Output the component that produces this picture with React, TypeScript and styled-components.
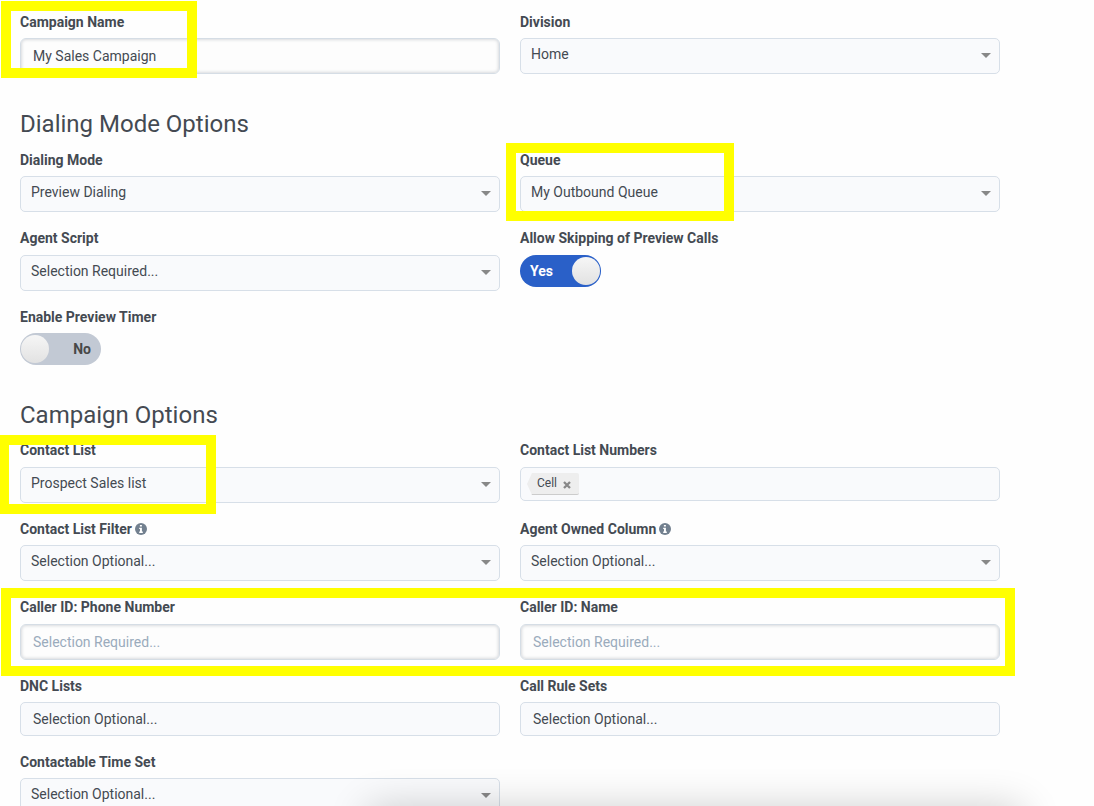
import React from "react";
import styled, { createGlobalStyle } from "styled-components";

const Global = createGlobalStyle`
  * { box-sizing: border-box; }
  html, body { margin: 0; height: 100%; overflow: hidden; background: #fefefe; }
  body { font-family: Roboto, "Liberation Sans", sans-serif; font-size: 14px; color: #444a52; }
`;

const Page = styled.main`
  position: relative;
  width: 1094px;
  height: 806px;
  overflow: hidden;
  padding: 12px 0 0 20px;
`;

const Section = styled.section<{ $rows: string; $top?: number }>`
  display: grid;
  width: 980px;
  grid-template-columns: 480px 480px;
  column-gap: 20px;
  grid-template-rows: ${(p) => p.$rows};
  padding-top: ${(p) => p.$top ?? 0}px;
`;

const Heading = styled.h2`
  grid-column: 1 / -1;
  margin: 0;
  font-size: 24px;
  line-height: 30px;
  font-weight: 400;
`;

const Field = styled.div`
  display: flex;
  flex-direction: column;
  align-items: flex-start;
`;

const Label = styled.label`
  display: flex;
  align-items: center;
  gap: 3px;
  height: 20px;
  margin-bottom: 6.25px;
  font-weight: 700;
  line-height: 20px;
  white-space: nowrap;
`;

const SelectBox = styled.div`
  display: flex;
  align-items: center;
  justify-content: space-between;
  width: 100%;
  height: 36px;
  padding: 0 8px 4px 10px;
  border: 1px solid #d7dfe8;
  border-radius: 5px;
  background: #f9fafc;
`;

const Caret = styled.span`
  width: 0;
  height: 0;
  margin-top: 3px;
  border: 5px solid transparent;
  border-top: 5px solid #888;
  border-bottom: 0;
`;

const TextBox = styled.div<{ $placeholder?: boolean }>`
  width: 100%;
  height: 36px;
  padding: 0 12px;
  border: 1px solid #d5dde5;
  border-radius: 6px;
  background: #fdfdfd;
  box-shadow: inset 0 0 3px 1px rgba(40, 55, 70, 0.17);
  line-height: 35px;
  color: ${(p) => (p.$placeholder ? "#9aabbc" : "#444a52")};
`;

const MultiBox = styled.div`
  display: flex;
  align-items: center;
  width: 100%;
  height: 34px;
  padding: 0 12px;
  border: 1px solid #d7dfe8;
  border-radius: 5px;
  background: #f9fafc;
`;

const Tag = styled.span`
  display: flex;
  align-items: center;
  gap: 6px;
  height: 22px;
  width: 52px;
  margin: 1px 0 0 -6px;
  padding: 0 0 2px 10px;
  font-size: 12px;
  background: #eee;
  clip-path: polygon(5px 0, 100% 0, 100% 100%, 5px 100%, 0 50%);
  border-bottom: 1px solid #ccc;
  border-radius: 0 2px 2px 0;
`;

const CrossIcon = styled.svg`
  margin-top: 4px;
  flex: none;
`;

const Track = styled.div<{ $on?: boolean }>`
  display: flex;
  flex-direction: ${(p) => (p.$on ? "row" : "row-reverse")};
  align-items: center;
  justify-content: space-between;
  width: 81px;
  height: 32px;
  padding: ${(p) => (p.$on ? "0 1px 0 10px" : "0 10px 0 1px")};
  border-radius: 16px;
  background: ${(p) => (p.$on ? "#2a60c8" : "#c2c9d4")};
  color: ${(p) => (p.$on ? "#fff" : "#484848")};
  font-weight: 700;
`;

const Knob = styled.span`
  width: 28px;
  height: 28px;
  border-radius: 50%;
  background: linear-gradient(#f6f6f6, #e2e2e2);
`;

const Highlight = styled.div<{ $x: number; $y: number; $w: number; $h: number; $left?: number }>`
  position: absolute;
  left: ${(p) => p.$x}px;
  top: ${(p) => p.$y}px;
  width: ${(p) => p.$w}px;
  height: ${(p) => p.$h}px;
  border: 10px solid #ffff00;
  border-left-width: ${(p) => p.$left ?? 10}px;
  pointer-events: none;
`;

const FooterShadow = styled.div`
  position: absolute;
  left: 372px;
  width: 646px;
  top: 812px;
  height: 60px;
  box-shadow: 0 0 40px 4px rgba(0, 0, 0, 0.2);
`;

const InfoIcon = () => (
  <svg width="12" height="12" viewBox="0 0 12 12">
    <circle cx="6" cy="6" r="6" fill="#72808f" />
    <path d="M4.9 1.9h2v1.7h-2zM4.2 4.7h2.7v3.9h.9V10H4.2V8.6H5V6h-.8z" fill="#fff" />
  </svg>
);

const Select = ({ label, value, info }: { label: string; value: string; info?: boolean }) => (
  <Field>
    <Label>{label}{info && <InfoIcon />}</Label>
    <SelectBox>{value}<Caret /></SelectBox>
  </Field>
);

const Input = ({ label, value, placeholder }: { label: string; value?: string; placeholder?: string }) => (
  <Field>
    <Label>{label}</Label>
    <TextBox $placeholder={!value}>{value ?? placeholder}</TextBox>
  </Field>
);

const Multi = ({ label, children }: { label: string; children: React.ReactNode }) => (
  <Field>
    <Label>{label}</Label>
    <MultiBox>{children}</MultiBox>
  </Field>
);

const Toggle = ({ label, on }: { label: string; on?: boolean }) => (
  <Field>
    <Label>{label}</Label>
    <Track $on={on}>{on ? "Yes" : "No"}<Knob /></Track>
  </Field>
);

export default function App() {
  return (
    <>
      <Global />
      <Page>
        <Section $rows="62px">
          <Input label="Campaign Name" value="My Sales Campaign" />
          <Select label="Division" value="Home" />
        </Section>

        <Section $rows="41px 78.5px 78.5px 58px" $top={34.75}>
          <Heading>Dialing Mode Options</Heading>
          <Select label="Dialing Mode" value="Preview Dialing" />
          <Select label="Queue" value="My Outbound Queue" />
          <Select label="Agent Script" value="Selection Required..." />
          <Toggle label="Allow Skipping of Preview Calls" on />
          <Toggle label="Enable Preview Timer" />
        </Section>

        <Section $rows="40.5px 78.5px 78.5px 78.5px 76px 62px" $top={35}>
          <Heading>Campaign Options</Heading>
          <Select label="Contact List" value="Prospect Sales list" />
          <Multi label="Contact List Numbers">
            <Tag>
              Cell
              <CrossIcon width="8" height="8" viewBox="0 0 8 8">
                <path d="M1 1l6 6M7 1L1 7" stroke="#888" strokeWidth="2.3" />
              </CrossIcon>
            </Tag>
          </Multi>
          <Select label="Contact List Filter" value="Selection Optional..." info />
          <Select label="Agent Owned Column" value="Selection Optional..." info />
          <Input label="Caller ID: Phone Number" placeholder="Selection Required..." />
          <Input label="Caller ID: Name" placeholder="Selection Required..." />
          <Multi label="DNC Lists">Selection Optional...</Multi>
          <Multi label="Call Rule Sets">Selection Optional...</Multi>
          <Select label="Contactable Time Set" value="Selection Optional..." />
        </Section>

        <FooterShadow />
        <Highlight $x={1} $y={1} $w={196} $h={77} />
        <Highlight $x={506} $y={143} $w={228} $h={78} />
        <Highlight $x={0} $y={435} $w={216} $h={79} $left={9} />
        <Highlight $x={1} $y={588} $w={1014} $h={88} />
      </Page>
    </>
  );
}
